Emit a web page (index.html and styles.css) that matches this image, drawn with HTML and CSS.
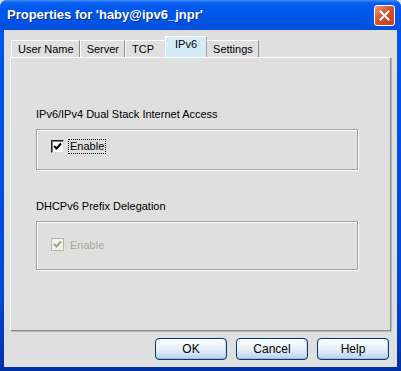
FILE: index.html
```html
<!DOCTYPE html>
<html lang="en">
<head>
    <meta charset="UTF-8">
    <title>Properties for 'haby@ipv6_jnpr'</title>
    <link rel="stylesheet" href="styles.css">
</head>
<body>
    <div class="window">
        <div class="titlebar">
            <span class="title">Properties for 'haby@ipv6_jnpr'</span>
            <span class="close">
                <svg width="11" height="11" viewBox="0 0 11 11">
                    <path d="M1.5 1.5 L9.5 9.5 M9.5 1.5 L1.5 9.5" stroke="#fff" stroke-width="2" stroke-linecap="square"/>
                </svg>
            </span>
        </div>

        <div class="client">
            <div class="tabs">
                <div class="tab">User Name</div>
                <div class="tab">Server</div>
                <div class="tab wide">TCP</div>
                <div class="tab selected">IPv6</div>
                <div class="tab">Settings</div>
            </div>

            <div class="panel">
                <div class="group-label">IPv6/IPv4 Dual Stack Internet Access</div>
                <div class="group">
                    <label class="check">
                        <span class="box">
                            <svg width="9" height="9" viewBox="0 0 9 9">
                                <path d="M1 4 L3.5 6.5 L8 1.5" fill="none" stroke="#000" stroke-width="2"/>
                            </svg>
                        </span>
                        <span class="focus">Enable</span>
                    </label>
                </div>

                <div class="group-label second">DHCPv6 Prefix Delegation</div>
                <div class="group tall">
                    <label class="check disabled">
                        <span class="box">
                            <svg width="9" height="9" viewBox="0 0 9 9">
                                <path d="M1 4 L3.5 6.5 L8 1.5" fill="none" stroke="#a5a494" stroke-width="2"/>
                            </svg>
                        </span>
                        <span class="text">Enable</span>
                    </label>
                </div>
            </div>

            <div class="buttons">
                <button type="button">OK</button>
                <button type="button">Cancel</button>
                <button type="button">Help</button>
            </div>
        </div>
    </div>
</body>
</html>
```

FILE: styles.css
```css
* {
    box-sizing: border-box;
}

html, body {
    margin: 0;
    padding: 0;
    width: 401px;
    height: 371px;
    overflow: hidden;
    background-color: #dfdfdf;
    font-family: "Liberation Sans", Arial, sans-serif;
    font-size: 11px;
    color: #000;
}

.window {
    width: 401px;
    height: 371px;
    display: flex;
    flex-direction: column;
    background: linear-gradient(to bottom, #0058ee, #0046d5 80%, #002fa8);
    border-radius: 7px 7px 0 0;
}

.titlebar {
    height: 30px;
    flex-shrink: 0;
    display: flex;
    align-items: center;
    padding: 0 6px 0 7px;
    background: linear-gradient(to bottom, #3c8cf8 0px, #0a5ef0 3px, #0058ee 8px, #0054e4 22px, #0050dc 30px);
    border-radius: 7px 7px 0 0;
}

.title {
    flex: 1;
    color: #fff;
    font-weight: bold;
    font-size: 13px;
    text-shadow: 1px 1px 0 #0b2fa0;
    padding-bottom: 1px;
}

.close {
    width: 21px;
    height: 21px;
    margin-top: 1px;
    display: flex;
    align-items: center;
    justify-content: center;
    border: 1px solid #fff;
    border-radius: 3px;
    background: linear-gradient(135deg, #ec9a7e, #d5532e 45%, #c33e18);
}

.client {
    flex: 1;
    margin: 0 4px 4px 4px;
    padding: 6px 6px 7px 6px;
    background-color: #dfdfdf;
    display: flex;
    flex-direction: column;
}

.tabs {
    height: 21px;
    flex-shrink: 0;
    display: flex;
    align-items: flex-end;
    padding-left: 1px;
}

.tab {
    height: 17px;
    padding: 0 5px 0 6px;
    line-height: 17px;
    border-top: 1px solid #fff;
    border-left: 1px solid #fff;
    border-right: 1px solid #8c8c8c;
    white-space: nowrap;
}

.tab.wide {
    padding: 0 12px 0 6px;
}

.tab.selected {
    height: 21px;
    line-height: 15px;
    padding: 0 9px 0 9px;
    margin: 0 -1px 0 -2px;
    background-color: #d4ecf8;
    border-right-color: #a8a8a8;
    position: relative;
    z-index: 1;
}

.panel {
    height: 274px;
    flex-shrink: 0;
    border-top: 1px solid #fff;
    border-left: 1px solid #fff;
    border-right: 1px solid #8c8c8c;
    border-bottom: 1px solid #8c8c8c;
    box-shadow: 1px 1px 0 #b8b8b8;
    padding: 49px 0 0 25px;
}

.group-label {
    height: 14px;
    line-height: 14px;
}

.group-label.second {
    margin-top: 29px;
}

.group {
    width: 322px;
    height: 41px;
    margin-top: 8px;
    border: 1px solid #a0a0a0;
    box-shadow: inset 1px 1px 0 #fff, 1px 1px 0 #fff;
    padding: 0 0 0 14px;
    display: flex;
    align-items: flex-start;
}

.group.tall {
    height: 49px;
}

.check {
    display: flex;
    align-items: center;
    margin-top: 10px;
}

.group.tall .check {
    margin-top: 16px;
}

.box {
    width: 13px;
    height: 13px;
    border: 1px solid #1c1c1c;
    border-right-color: #dcdcdc;
    border-bottom-color: #dcdcdc;
    background-color: #fff;
    box-shadow: inset 1px 1px 0 #808080;
    display: flex;
    align-items: center;
    justify-content: center;
}

.focus {
    margin-left: 5px;
    padding: 0 1px;
    line-height: 13px;
    outline: 1px dotted #000;
}

.check.disabled .box {
    border-color: #b8b8b0;
    background-color: #f2f1e8;
    box-shadow: none;
}

.check.disabled .text {
    margin-left: 6px;
    color: #aca899;
}

.buttons {
    margin-top: 7px;
    display: flex;
    justify-content: flex-end;
    gap: 9px;
    padding-right: 2px;
}

.buttons button {
    width: 72px;
    height: 22px;
    font-family: "Liberation Sans", Arial, sans-serif;
    font-size: 12px;
    color: #000;
    border: 1px solid #003c74;
    border-radius: 4px;
    background: linear-gradient(to bottom, #fbfdff, #e4eef8 55%, #b8d0ea);
    box-shadow: inset 0 -1px 0 #9fbedf, inset -1px 0 0 #c4d8ee;
    padding: 0;
    cursor: pointer;
}
```
